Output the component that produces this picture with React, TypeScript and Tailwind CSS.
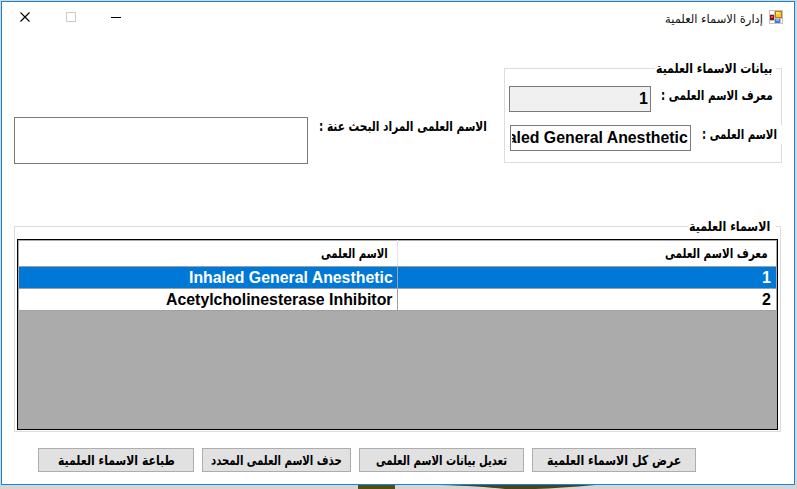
import { useLayoutEffect, useRef, useState } from "react";

const arabicFont = "font-['DejaVu_Sans','Noto_Sans',sans-serif]";
const latinFont = "font-['Liberation_Sans',sans-serif]";

/** Single line of text, condensed or widened to fill the given width. */
function FitText({ text, width, className = "", rtl = true }: { text: string; width: number; className?: string; rtl?: boolean }) {
  const ref = useRef<HTMLSpanElement>(null);
  const [scale, setScale] = useState(1);
  useLayoutEffect(() => {
    if (ref.current) setScale(width / ref.current.offsetWidth);
  }, [width, text]);
  return (
    <span dir="ltr" className="flex h-5 shrink-0 items-center" style={{ width }}>
      <span
        ref={ref}
        dir={rtl ? "rtl" : "ltr"}
        className={`inline-block origin-left whitespace-nowrap leading-5 ${className}`}
        style={{ transform: `scaleX(${scale})` }}
      >
        {text}
      </span>
    </span>
  );
}

function Label({ text, width }: { text: string; width: number }) {
  return <FitText text={text} width={width} className={`${arabicFont} text-[13.5px] font-bold`} />;
}

function Latin({ text, width }: { text: string; width: number }) {
  return <FitText text={text} width={width} rtl={false} className={`${latinFont} text-[16px] font-bold`} />;
}

function AppIcon() {
  return (
    <svg width="14" height="14" viewBox="0 0 14 14" shapeRendering="crispEdges">
      <rect width="14" height="14" fill="#c4c4c4" />
      <path d="M1 1h4v3H1zM1 11h4v2H1zM12 9h1v4h-1z" fill="#fff" />
      <rect x="6" y="1" width="7" height="7" fill="#b87a08" />
      <rect x="7" y="2" width="5" height="5" fill="#ffc928" />
      <rect x="7" y="2" width="3" height="2" fill="#ffe88c" />
      <rect x="1" y="5" width="4" height="5" fill="#8c1010" />
      <rect x="2" y="6" width="2" height="2" fill="#ef5040" />
      <rect x="6" y="9" width="5" height="4" fill="#4279db" />
      <rect x="7" y="9" width="3" height="2" fill="#83b4ff" />
    </svg>
  );
}

function TitleBar() {
  return (
    <header className="flex h-[52px] shrink-0 items-start pl-[18px] pr-[11px] pt-2">
      <svg width="105" height="16" viewBox="20 10 105 16" className="overflow-visible">
        <path d="M20.5 12.5l9 9M29.5 12.5l-9 9" stroke="#000" strokeWidth="1.15" />
        <rect x="66.5" y="12.5" width="9" height="9" fill="none" stroke="#ccc" />
        <path d="M111 17.5h10" stroke="#000" shapeRendering="crispEdges" />
      </svg>
      <h1 className="ml-auto mr-[6px] mt-[-1px] flex">
        <FitText text="إدارة الاسماء العلمية" width={98} className={`${arabicFont} text-[12px] text-[#111]`} />
      </h1>
      <AppIcon />
    </header>
  );
}

function Legend({ text, width, tail }: { text: string; width: number; tail: string }) {
  return (
    <div className="-mt-2.5 flex h-5 items-center">
      <span className="h-px flex-1 bg-[#dcdcdc]" />
      <span className="-mt-px ml-px">
        <Label text={text} width={width} />
      </span>
      <span className={`h-px bg-[#dcdcdc] ${tail}`} />
    </div>
  );
}

function DetailsGroup() {
  return (
    <section className="mt-[14px] h-[94px] w-[278px]">
      <Legend text="بيانات الاسماء العلمية" width={116} tail="ml-[4px] w-[6px]" />
      <div className="-mt-2.5 flex h-[95px]">
        <div className="flex-1 border-b border-l border-[#dcdcdc]">
          <div className="ml-1 mt-[18px] flex h-[26px]">
            <div className="flex w-[142px] items-center justify-end border border-[#7a7a7a] bg-[#f0f0f0] pr-[2px]">
              <Latin text="1" width={9} />
            </div>
            <div className="-mt-px ml-[10px]">
              <Label text="معرف الاسم العلمى :" width={112} />
            </div>
          </div>
          <div className="ml-[5px] mt-[13px] flex h-[26px]">
            <div className="flex w-[181px] items-center justify-end overflow-hidden border border-[#7a7a7a] bg-white pl-px pr-[2px]">
              <div className="flex w-[176px] justify-end overflow-hidden">
                <Latin text="Inhaled General Anesthetic" width={204} />
              </div>
            </div>
            <div className="-mt-px ml-[11px]">
              <Label text="الاسم العلمى :" width={75} />
            </div>
          </div>
        </div>
        <div className="flex w-px flex-col justify-between">
          <span className="h-[57px] bg-[#dcdcdc]" />
          <span className="h-[19px] bg-[#dcdcdc]" />
        </div>
      </div>
    </section>
  );
}

function NamesGrid() {
  return (
    <section className="ml-3 mt-[63px] h-[207px] w-[767px]">
      <Legend text="الاسماء العلمية" width={81} tail="ml-[6px] w-[5px]" />
      <div className="-mt-2.5 h-[206px] border-x border-b border-[#dcdcdc] px-[2px] pt-[13px]">
        <div className="h-[191px] border border-black bg-[#ababab] pl-px pr-px pt-px text-black">
          <div className="flex h-[26px] border-b border-[#a0a0a0] bg-white">
            <div className="-mt-px flex w-[379px] items-center justify-end border-r border-[#e5e5e5] pr-[9px]">
              <Label text="الاسم العلمى" width={67} />
            </div>
            <div className="-mt-px flex flex-1 items-center justify-end pr-[8px]">
              <Label text="معرف الاسم العلمى" width={103} />
            </div>
          </div>
          <div className="flex h-[22px] border-b border-[#a0a0a0] bg-[#0078d7] text-white">
            <div className="flex w-[379px] items-center justify-end border-r border-[#a0a0a0] pr-[4px]">
              <Latin text="Inhaled General Anesthetic" width={204} />
            </div>
            <div className="flex flex-1 items-center justify-end pr-[5px]">
              <Latin text="1" width={9} />
            </div>
          </div>
          <div className="flex h-[22px] border-b border-[#a0a0a0] bg-white">
            <div className="flex w-[379px] items-center justify-end border-r border-[#a0a0a0] pr-[4px]">
              <Latin text="Acetylcholinesterase Inhibitor" width={227} />
            </div>
            <div className="flex flex-1 items-center justify-end pr-[5px]">
              <Latin text="2" width={9} />
            </div>
          </div>
        </div>
      </div>
    </section>
  );
}

function Action({ text, width, className }: { text: string; width: number; className: string }) {
  return (
    <button className={`flex h-6 items-center justify-center border border-[#adadad] bg-[#e1e1e1] ${className}`}>
      <Label text={text} width={width} />
    </button>
  );
}

export default function App() {
  return (
    <div className="h-[489px] w-[797px] overflow-hidden bg-[#d5d5d5] pl-px pt-px">
      <main className="flex h-[484px] w-[794px] flex-col border border-[#1883d7] bg-white text-black">
        <TitleBar />
        <div className="flex h-[109px] shrink-0 pl-3">
          <div className="mt-[63px] h-[47px] w-[294px] border border-[#7a7a7a]" />
          <div className="ml-[11px] mr-[17px] mt-[62px]">
            <Label text="الاسم العلمى المراد البحث عنة :" width={168} />
          </div>
          <DetailsGroup />
        </div>
        <NamesGrid />
        <footer className="ml-9 mt-[15px] flex gap-2">
          <Action text="طباعة الاسماء العلمية" width={117} className="w-[156px]" />
          <Action text="حذف الاسم العلمى المحدد" width={131} className="w-[149px]" />
          <Action text="تعديل بيانات الاسم العلمى" width={131} className="w-[165px]" />
          <Action text="عرض كل الاسماء العلمية" width={134} className="w-[164px]" />
        </footer>
      </main>
      <svg width="796" height="4" viewBox="1 485 796 4">
        <rect x="358" y="485" width="37" height="4" fill="#504f10" />
        <path d="M440 485h155q-35 3-60 4h-30q-25-3-65-4" fill="#44461d" />
      </svg>
    </div>
  );
}
